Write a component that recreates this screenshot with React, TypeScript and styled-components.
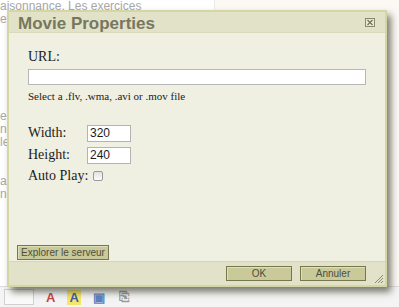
import styled, { createGlobalStyle } from 'styled-components';

const GlobalStyle = createGlobalStyle`
  html, body {
    margin: 0;
    padding: 0;
    background: #fcf9f5;
  }
  #root {
    width: 399px;
    height: 307px;
    overflow: hidden;
  }
`;

const Page = styled.div`
  position: relative;
  width: 399px;
  height: 307px;
  overflow: hidden;
  font-family: "Liberation Sans", Arial, sans-serif;
`;

// page behind the modal
const Backdrop = styled.div`
  display: flex;
  flex-direction: column;
  height: 100%;
`;

const TextArea = styled.div`
  flex: 1;
  width: 214px;
  background: #ffffff;
  border-right: 1px solid #ececec;
  color: #a8a8a8;
  font-size: 12px;
  line-height: 13px;
  white-space: nowrap;
  overflow: hidden;
`;

const BackLine = styled.div<{ $gap?: number }>`
  margin-top: ${({ $gap }) => $gap ?? 0}px;
`;

const Toolbar = styled.div`
  height: 20px;
  display: flex;
  align-items: center;
  gap: 10px;
  padding-left: 4px;
  background: #f4f4f4;
  border-top: 1px solid #dcdcdc;
`;

const ToolSlot = styled.div`
  width: 28px;
  height: 14px;
  border: 1px solid #d0d0d0;
  background: #fafafa;
`;

const ToolGlyph = styled.span<{ $color: string; $bg?: string }>`
  font-weight: bold;
  font-size: 13px;
  color: ${({ $color }) => $color};
  background: ${({ $bg }) => $bg ?? 'transparent'};
  padding: 0 2px;
`;

const Dialog = styled.div`
  position: absolute;
  left: 7px;
  top: 10px;
  width: 376px;
  height: 273px;
  border: 2px solid #d5d5a6;
  background: #efefe2;
  display: flex;
  flex-direction: column;
  box-shadow: 4px 5px 7px rgba(40, 40, 20, 0.6);
`;

const TitleBar = styled.div`
  height: 21px;
  display: flex;
  align-items: center;
  justify-content: space-between;
  padding: 3px 9px 0 9px;
  box-sizing: border-box;
  background: #e2e2c8;
  border-bottom: 1px solid #d9d9bc;
`;

const Title = styled.span`
  font-size: 17px;
  font-weight: bold;
  color: #77775f;
`;

const CloseBox = styled.span`
  display: flex;
  margin-right: 1px;
  margin-top: -2px;
`;

const Body = styled.div`
  flex: 1;
  display: flex;
  flex-direction: column;
  justify-content: space-between;
  padding: 16px 19px 1px 19px;
`;

const Form = styled.div`
  display: flex;
  flex-direction: column;
  font-family: "Liberation Serif", "Times New Roman", serif;
  color: #1c1c1c;
`;

const Label = styled.label`
  font-size: 14px;
  line-height: 16px;
`;

const UrlInput = styled.div`
  margin-top: 4px;
  height: 14px;
  border: 1px solid #b7b7b7;
  background: #ffffff;
`;

const Hint = styled.div`
  margin-top: 5px;
  font-size: 11px;
  line-height: 13px;
`;

const FieldRow = styled.div<{ $top: number }>`
  display: flex;
  align-items: center;
  margin-top: ${({ $top }) => $top}px;
  height: 18px;
`;

const FieldLabel = styled.span<{ $width?: number }>`
  font-size: 14px;
  width: ${({ $width }) => ($width ? `${$width}px` : 'auto')};
`;

const SmallInput = styled.div`
  width: 40px;
  height: 15px;
  border: 1px solid #b3b3b3;
  background: #ffffff;
  font-family: "Liberation Sans", Arial, sans-serif;
  font-size: 12px;
  line-height: 15px;
  padding-left: 2px;
  box-sizing: content-box;
`;

const Check = styled.span`
  width: 8px;
  height: 8px;
  margin-left: 5px;
  border: 1px solid #9a9a9a;
  border-radius: 2px;
  background: linear-gradient(#e2e2e2, #fbfbfb);
`;

const OliveButton = styled.div<{ $width: number }>`
  width: ${({ $width }) => $width}px;
  height: 13px;
  border: 1px solid #77774e;
  box-shadow: inset 1px 1px 0 #e0e0b8;
  background: #c9c99a;
  font-size: 10px;
  line-height: 13px;
  color: #4e4e3a;
  white-space: nowrap;
  display: flex;
  justify-content: center;
  align-items: center;
`;

const ExploreWrap = styled.div`
  margin-left: -11px;
`;

const Footer = styled.div`
  height: 23px;
  display: flex;
  justify-content: flex-end;
  align-items: center;
  gap: 8px;
  padding-right: 19px;
  background: #e2e2c8;
  border-top: 1px solid #d6d6b4;
  position: relative;
`;

const Grip = styled.svg`
  position: absolute;
  right: 1px;
  bottom: 1px;
`;

export default function App() {
  return (
    <Page>
      <GlobalStyle />
      <Backdrop>
        <TextArea>
          <BackLine>aisonnance. Les exercices</BackLine>
          <BackLine>et</BackLine>
          <BackLine $gap={84}>e</BackLine>
          <BackLine>ni</BackLine>
          <BackLine>le</BackLine>
          <BackLine $gap={26}>a</BackLine>
          <BackLine>nc</BackLine>
        </TextArea>
        <Toolbar>
          <ToolSlot />
          <ToolGlyph $color="#c44">A</ToolGlyph>
          <ToolGlyph $color="#3a5fb0" $bg="#f5e66a">A</ToolGlyph>
          <ToolGlyph $color="#6080c0">▣</ToolGlyph>
          <ToolGlyph $color="#999">⎘</ToolGlyph>
        </Toolbar>
      </Backdrop>

      <Dialog>
        <TitleBar>
          <Title>Movie Properties</Title>
          <CloseBox>
            <svg width="10" height="9" viewBox="0 0 10 9">
              <rect x="0.5" y="0.5" width="9" height="8" fill="#e8e8d8" stroke="#8a8a6a" />
              <path d="M2.5 2 L7.5 7 M7.5 2 L2.5 7" stroke="#6f6f55" strokeWidth="1.1" />
            </svg>
          </CloseBox>
        </TitleBar>
        <Body>
          <Form>
            <Label>URL:</Label>
            <UrlInput />
            <Hint>Select a .flv, .wma, .avi or .mov file</Hint>
            <FieldRow $top={21}>
              <FieldLabel $width={59}>Width:</FieldLabel>
              <SmallInput>320</SmallInput>
            </FieldRow>
            <FieldRow $top={4}>
              <FieldLabel $width={59}>Height:</FieldLabel>
              <SmallInput>240</SmallInput>
            </FieldRow>
            <FieldRow $top={3}>
              <FieldLabel>Auto Play:</FieldLabel>
              <Check />
            </FieldRow>
          </Form>
          <ExploreWrap>
            <OliveButton $width={90}>Explorer le serveur</OliveButton>
          </ExploreWrap>
        </Body>
        <Footer>
          <OliveButton $width={64}>OK</OliveButton>
          <OliveButton $width={64}>Annuler</OliveButton>
          <Grip width="10" height="10" viewBox="0 0 10 10">
            <path d="M9 1 L1 9 M9 4 L4 9 M9 7 L7 9" stroke="#8a8a6a" strokeWidth="1" />
          </Grip>
        </Footer>
      </Dialog>
    </Page>
  );
}
